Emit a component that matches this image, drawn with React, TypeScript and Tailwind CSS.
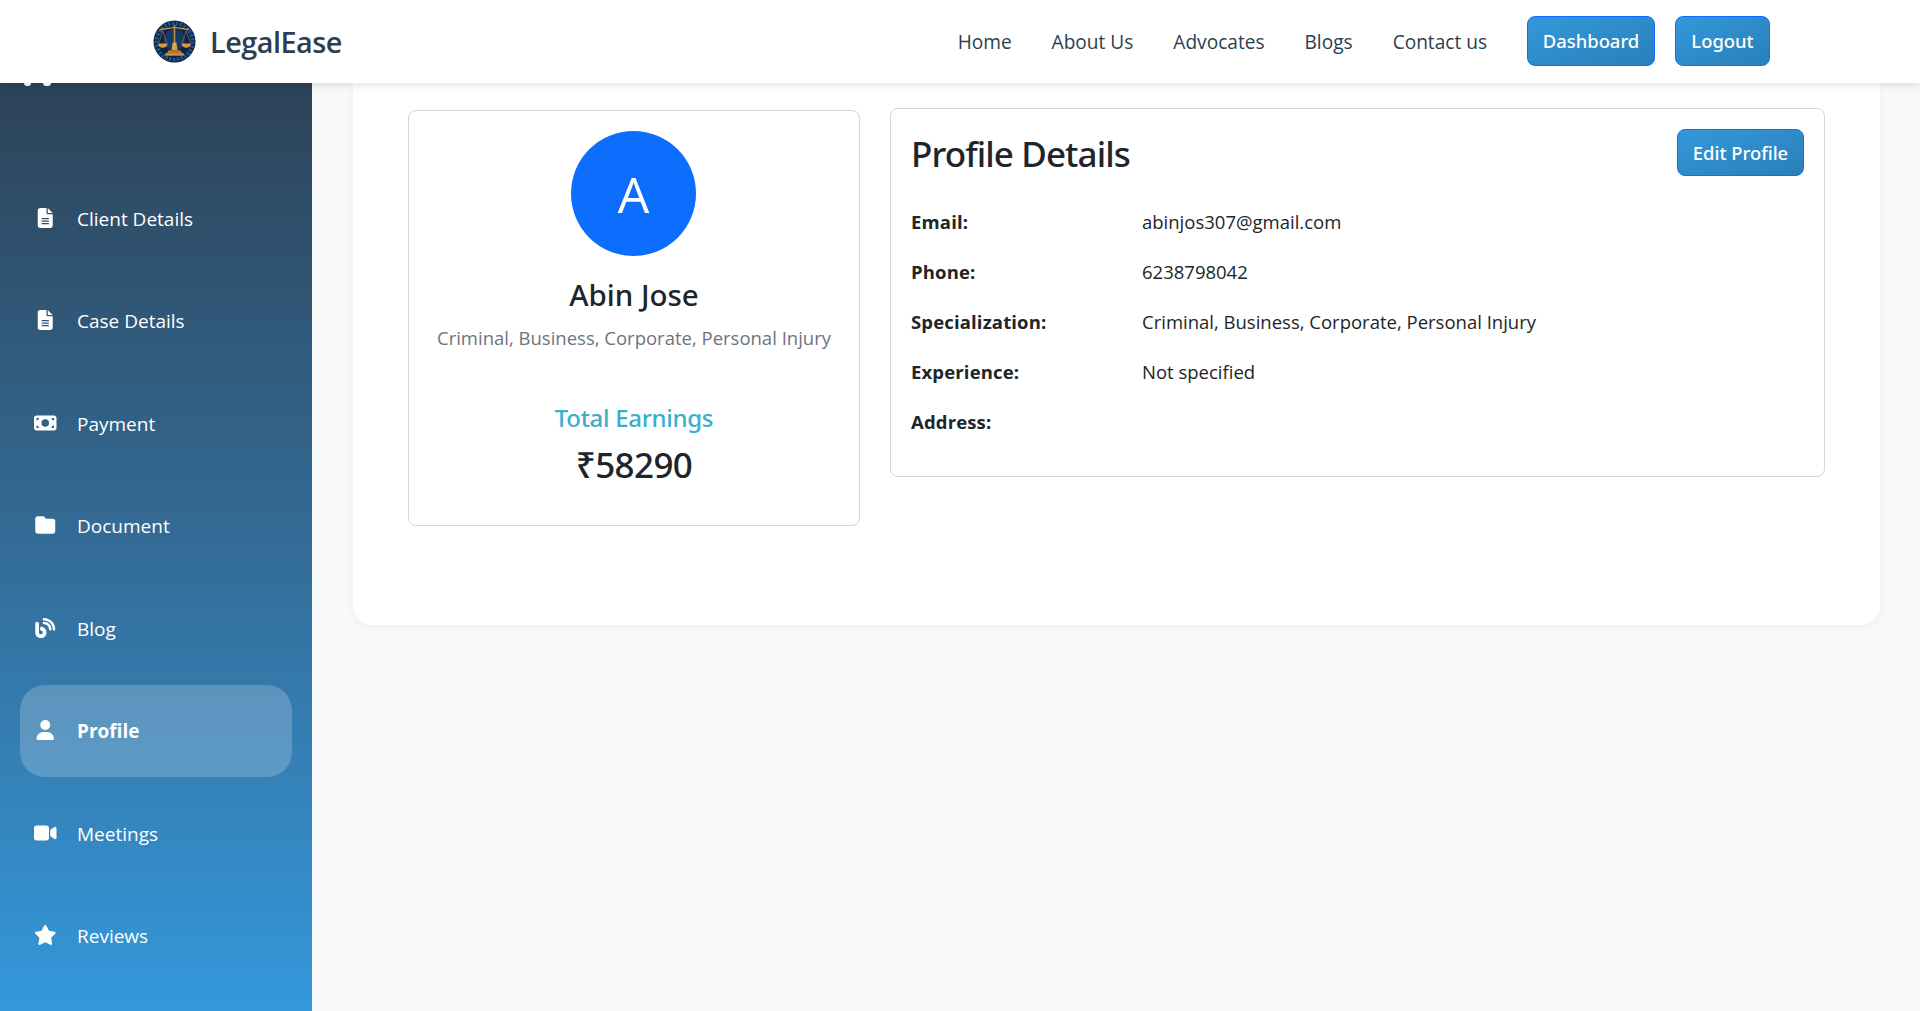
import { FaFileLines, FaMoneyBill, FaFolder, FaBlog, FaUser, FaVideo, FaStar } from "react-icons/fa6";

function Logo() {
  return (
    <svg width="43" height="43" viewBox="0 0 44 44" className="shrink-0">
      <circle cx="22" cy="22" r="21.500" fill="#10233f" />
      <circle cx="22" cy="22" r="18.500" fill="none" stroke="#1c5592" strokeWidth="4" strokeDasharray="2.500 1.500" />
      <circle cx="22" cy="20" r="11" fill="#163a68" />
      <path d="M7 10 L22 7.500 L37 10" stroke="#c98f3e" strokeWidth="1.400" fill="none" />
      <path d="M21.200 5h1.600v24h-1.600z" fill="#c98f3e" />
      <path d="M10 11 L6 23 M10 11 L14 23 M34 11 L30 23 M34 11 L38 23" stroke="#b8803a" strokeWidth="0.600" />
      <path d="M5 24h10c-.6 3-2.400 4.500-5 4.500S5.600 27 5 24z" fill="#d9973f" />
      <path d="M29 24h10c-.6 3-2.400 4.500-5 4.500s-4.400-1.500-5-4.500z" fill="#d9973f" />
      <path d="M20 23h4l1 8h-6z" fill="#e0a24a" />
      <path d="M16 31h12l2 3H14z" fill="#b87a33" />
      <path d="M12.500 34h19v2.500h-19z" fill="#d9973f" />
    </svg>
  );
}

const items = [
  { label: "Client Details", icon: FaFileLines },
  { label: "Case Details", icon: FaFileLines },
  { label: "Payment", icon: FaMoneyBill },
  { label: "Document", icon: FaFolder },
  { label: "Blog", icon: FaBlog },
  { label: "Profile", icon: FaUser, active: true },
  { label: "Meetings", icon: FaVideo },
  { label: "Reviews", icon: FaStar },
];

const details = [
  ["Email:", "abinjos307@gmail.com"],
  ["Phone:", "6238798042"],
  ["Specialization:", "Criminal, Business, Corporate, Personal Injury"],
  ["Experience:", "Not specified"],
  ["Address:", ""],
];

const btn =
  "flex items-center justify-center rounded-lg border border-[#0d6efd] bg-gradient-to-br from-[#3498db] to-[#2980b9] font-['Noto_Sans',sans-serif] text-[18.4px] font-medium text-white";

export default function App() {
  return (
    <div className="flex h-screen flex-col overflow-hidden bg-[#f8f9fa] font-['Open_Sans','Noto_Sans',sans-serif] text-[#212529]">
      <header className="relative z-10 flex h-[83px] shrink-0 items-center bg-white pl-[153px] pr-[150px] shadow-[0_2px_8px_rgba(0,0,0,0.12)]">
        <Logo />
        <span className="ml-[14px] text-[28.8px] font-semibold tracking-[-0.5px] text-[#2c3e50]">LegalEase</span>
        <nav className="ml-auto flex items-center gap-[40px] pt-[2px] text-[19.1px] text-[#2c3e50]">
          <a>Home</a>
          <a>About Us</a>
          <a>Advocates</a>
          <a>Blogs</a>
          <a>Contact us</a>
        </nav>
        <button className={`${btn} mb-[1px] ml-[40px] h-[50px] w-[128px]`}>Dashboard</button>
        <button className={`${btn} mb-[1px] ml-[20px] h-[50px] w-[95px]`}>Logout</button>
      </header>
      <div className="flex min-h-0 flex-1">
        <aside className="relative flex w-[312px] shrink-0 flex-col gap-[10.5px] bg-gradient-to-b from-[#2c4359] to-[#3498db] px-[20px] pt-[89px] text-white">
          <div className="absolute left-[24px] top-0 flex gap-[12px]">
            <span className="h-[3px] w-[7px] rounded-b-full bg-white" />
            <span className="h-[3px] w-[8px] rounded-b-full bg-white" />
          </div>
          {items.map(({ label, icon: Icon, active }) => (
            <div
              key={label}
              className={`flex h-[92px] items-center rounded-[25px] ${active ? "bg-white/20 font-bold" : ""}`}
            >
              <span className="ml-[14px] mr-[20.5px] flex w-[22.5px] justify-center">
                <Icon className="mb-[1px] h-[20px] w-[22.5px]" />
              </span>
              <span className="pt-[2px] text-[19px]">{label}</span>
            </div>
          ))}
        </aside>
        <main className="min-w-0 flex-1 pl-[41px] pr-[40px]">
          <section className="flex h-[542px] items-start gap-[30px] rounded-b-[20px] bg-white pl-[55px] pr-[55px] pt-[25px] shadow-[0_4px_12px_rgba(0,0,0,0.04)]">
            <div className="mt-[2px] flex h-[416px] w-[452px] shrink-0 flex-col items-center rounded-lg border border-[#d4d6d8] pt-[20px]">
              <div className="mr-[1px] flex h-[125px] w-[125px] items-center justify-center rounded-full bg-[#0d6efd] pt-[2px] text-[50px] font-normal text-white">A</div>
              <h2 className="mt-[20px] font-['Noto_Sans',sans-serif] text-[29.5px] font-medium leading-[38px]">Abin Jose</h2>
              <p className="mt-[10px] text-[18.5px] text-[#6c757d]">Criminal, Business, Corporate, Personal Injury</p>
              <h3 className="mt-[48px] font-['Noto_Sans',sans-serif] text-[24px] font-medium tracking-[-0.3px] text-[#3aaecb]">Total Earnings</h3>
              <p className="mt-[6px] font-['Noto_Sans',sans-serif] text-[35px] font-medium leading-[46px] tracking-[-0.6px]">₹58290</p>
            </div>
            <div className="flex h-[369px] min-w-0 flex-1 flex-col rounded-lg border border-[#d4d6d8] px-[20px] pt-[20px]">
              <div className="flex h-[47px] items-center justify-between">
                <h2 className="mt-[4px] font-['Noto_Sans',sans-serif] text-[35px] font-medium tracking-[-0.9px]">Profile Details</h2>
                <button className={`${btn} h-[47px] w-[127px]`}>Edit Profile</button>
              </div>
              <div className="mt-[33px] flex flex-col gap-[24px]">
                {details.map(([k, v]) => (
                  <div key={k} className="flex h-[26px] items-center text-[18.5px]">
                    <span className="w-[231px] shrink-0 font-bold tracking-[0.15px]">{k}</span>
                    <span>{v}</span>
                  </div>
                ))}
              </div>
            </div>
          </section>
        </main>
      </div>
    </div>
  );
}
